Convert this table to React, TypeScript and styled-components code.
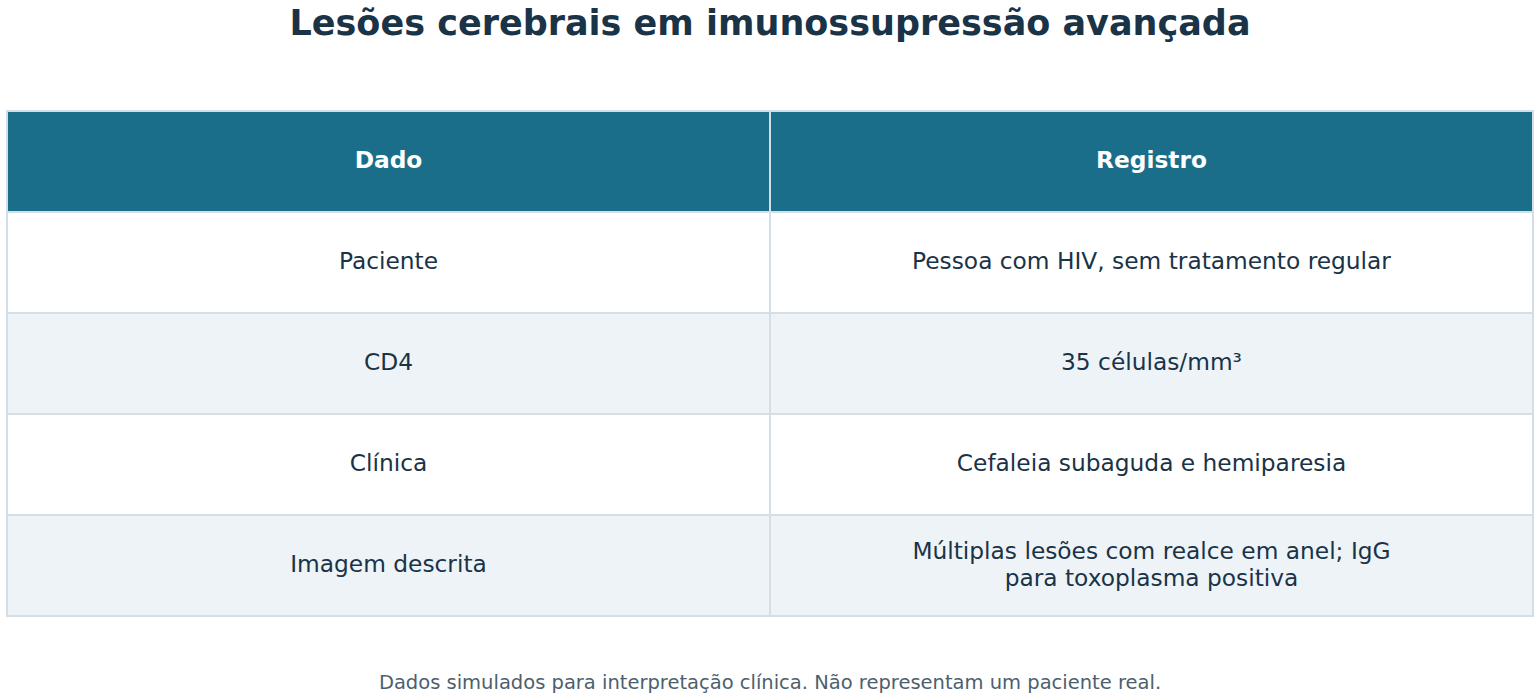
import React from "react";
import styled, { createGlobalStyle } from "styled-components";

const Global = createGlobalStyle`
  html, body { margin: 0; padding: 0; background: #ffffff; }
  body { font-family: "DejaVu Sans", "Liberation Sans", sans-serif; }
`;

const Page = styled.div`
  width: 1540px;
  height: 700px;
  box-sizing: border-box;
  padding: 0 6px;
  display: flex;
  flex-direction: column;
  align-items: stretch;
`;

const Title = styled.h1`
  margin: 0;
  height: 110px;
  box-sizing: border-box;
  padding-top: 2px;
  text-align: center;
  font-size: 35px;
  font-weight: bold;
  line-height: 42px;
  color: #1a3347;
`;

const Table = styled.table`
  width: 100%;
  border-collapse: collapse;
  table-layout: fixed;
  border: 2px solid #d3dee7;
`;

const HeadCell = styled.th`
  background: #1a6e89;
  color: #ffffff;
  font-size: 23.3px;
  font-weight: bold;
  height: 101px;
  padding: 0 20px 4px;
  text-align: center;
  border: 2px solid #d3dee7;
  box-sizing: border-box;
`;

const Row = styled.tr<{ $alt: boolean }>`
  background: ${(p) => (p.$alt ? "#eef3f7" : "#ffffff")};
`;

const Cell = styled.td`
  color: #1a3347;
  font-size: 23.3px;
  line-height: 27px;
  height: 101px;
  padding: 0 20px 4px;
  text-align: center;
  border: 2px solid #d3dee7;
  box-sizing: border-box;
`;

const Footer = styled.p`
  margin: 0;
  padding-top: 54px;
  text-align: center;
  font-size: 19.5px;
  color: #4d5f6e;
`;

const rows: [string, string][] = [
  ["Paciente", "Pessoa com HIV, sem tratamento regular"],
  ["CD4", "35 células/mm³"],
  ["Clínica", "Cefaleia subaguda e hemiparesia"],
  ["Imagem descrita", "Múltiplas lesões com realce em anel; IgG para toxoplasma positiva"],
];

const Wrap = styled.span`
  display: inline-block;
  max-width: 500px;
`;

export default function App() {
  return (
    <>
      <Global />
      <Page>
        <Title>Lesões cerebrais em imunossupressão avançada</Title>
        <Table>
          <thead>
            <tr>
              <HeadCell>Dado</HeadCell>
              <HeadCell>Registro</HeadCell>
            </tr>
          </thead>
          <tbody>
            {rows.map(([a, b], i) => (
              <Row key={a} $alt={i % 2 === 1}>
                <Cell>{a}</Cell>
                <Cell>
                  <Wrap>{b}</Wrap>
                </Cell>
              </Row>
            ))}
          </tbody>
        </Table>
        <Footer>Dados simulados para interpretação clínica. Não representam um paciente real.</Footer>
      </Page>
    </>
  );
}
